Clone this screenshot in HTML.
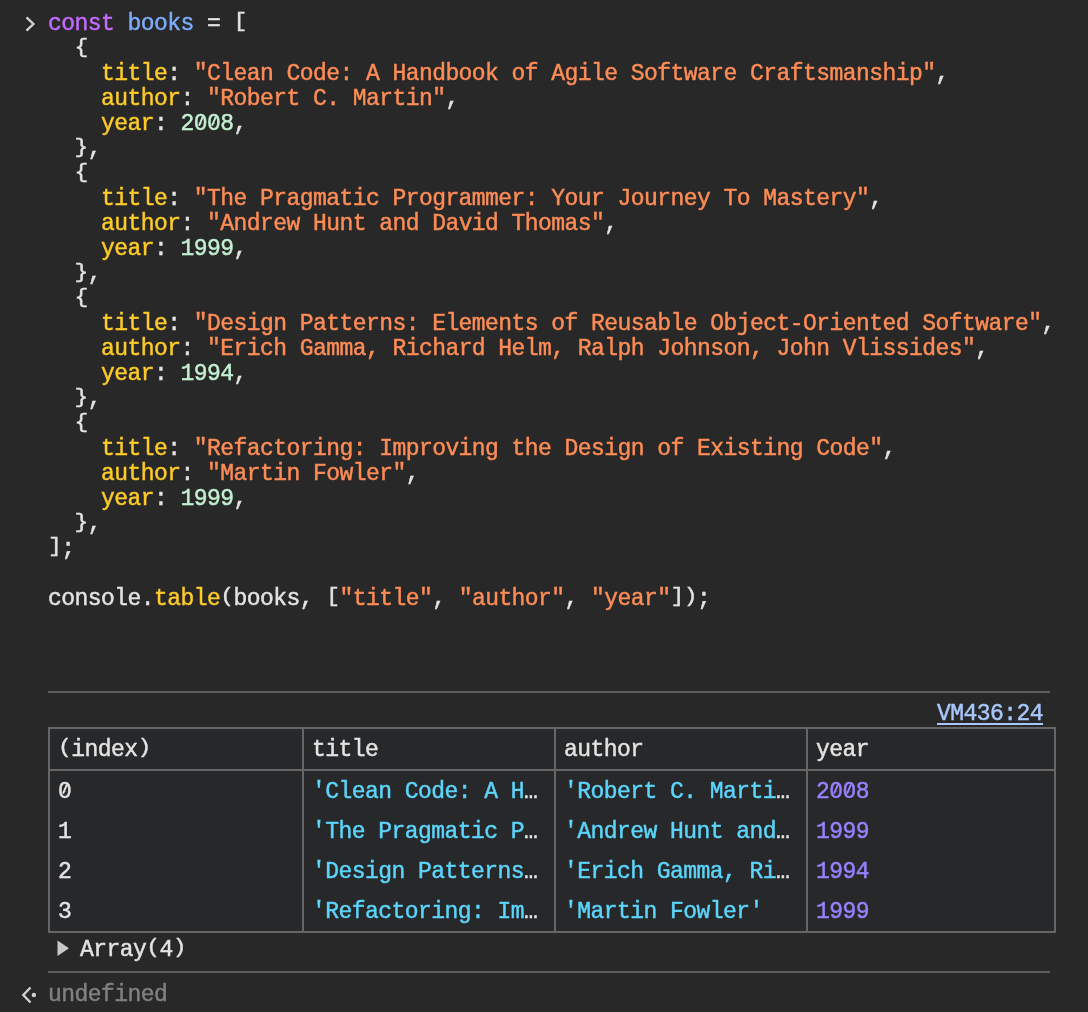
<!DOCTYPE html>
<html><head><meta charset="utf-8">
<style>
html,body{margin:0;padding:0;}
body{-webkit-text-stroke-width:0.45px;width:1088px;height:1012px;overflow:hidden;background:#282828;position:relative;font-family:"Liberation Mono",monospace;font-size:23px;color:#e3e3e3;letter-spacing:-0.557px;}
.abs{position:absolute;}
pre{margin:0;font:inherit;white-space:pre;}
#code{position:absolute;left:48px;top:12px;line-height:25px;}
.k{color:#c46bff}
.v{color:#7cacf8}
.p{color:#fdcb2a}
.s{color:#fd8c56}
.n{color:#c2f0d0}
.f{color:#fdcb2a}
.sep{position:absolute;left:48px;width:1002px;height:2px;background:#5e5e5e;}
#tbl{position:absolute;left:48px;top:727px;width:1004px;height:202px;border:2px solid #666;background:#27282a;}
.vl{position:absolute;top:729px;width:2px;height:202px;background:#666;}
#hb{position:absolute;left:50px;top:769px;width:1004px;height:2px;background:#666;}
.row{position:absolute;left:0;height:25px;line-height:25px;white-space:pre;}
.cell{position:absolute;top:0;white-space:pre;}
.e{color:#e3e3e3}
.z{display:inline-block;position:relative;}
.z::before{content:"";position:absolute;left:4.8px;top:7.3px;width:4.2px;height:4.2px;background:var(--bg,#282828);}
.z::after{content:"";position:absolute;left:5.8px;top:4.15px;width:2.2px;height:10px;background:currentColor;transform:rotate(23.4deg);}
.row{--bg:#27282a;}

.bc{display:inline-block;transform-origin:50% 11.5px;transform:translateY(-1.7px) scaleY(0.91)}
.bk{display:inline-block;transform-origin:50% 11.55px;transform:translateY(-1.55px) scaleY(0.852)}
.c{color:#5cd5fb}
.num{color:#9980ff}
#link{position:absolute;left:937px;top:702px;color:#a8c7fa;text-decoration:underline;text-decoration-thickness:2px;text-underline-offset:3px;letter-spacing:-0.557px;line-height:25px;}
#arr{position:absolute;left:80px;top:938px;line-height:25px;}
#undef{position:absolute;left:48px;top:983px;color:#808080;line-height:25px;}
</style></head>
<body>
<div id="wrap" style="position:absolute;left:0;top:0;width:1088px;height:1012px;will-change:transform">
<svg class="abs" style="left:20px;top:10px" width="20" height="28" viewBox="0 0 20 28"><path d="M6.5 7.3 L13.4 14 L6.5 20.7" fill="none" stroke="#d0d0d0" stroke-width="2.4"/></svg>
<pre id="code"><span class="k">const</span> <span class="v">books</span> = <span class="bk">[</span>
  <span class="bc">{</span>
    <span class="p">title</span>: <span class="s">"Clean Code: A Handbook of Agile Software Craftsmanship"</span>,
    <span class="p">author</span>: <span class="s">"Robert C. Martin"</span>,
    <span class="p">year</span>: <span class="n">2<span class="z">0</span><span class="z">0</span>8</span>,
  <span class="bc">}</span>,
  <span class="bc">{</span>
    <span class="p">title</span>: <span class="s">"The Pragmatic Programmer: Your Journey To Mastery"</span>,
    <span class="p">author</span>: <span class="s">"Andrew Hunt and David Thomas"</span>,
    <span class="p">year</span>: <span class="n">1999</span>,
  <span class="bc">}</span>,
  <span class="bc">{</span>
    <span class="p">title</span>: <span class="s">"Design Patterns: Elements of Reusable Object-Oriented Software"</span>,
    <span class="p">author</span>: <span class="s">"Erich Gamma, Richard Helm, Ralph Johnson, John Vlissides"</span>,
    <span class="p">year</span>: <span class="n">1994</span>,
  <span class="bc">}</span>,
  <span class="bc">{</span>
    <span class="p">title</span>: <span class="s">"Refactoring: Improving the Design of Existing Code"</span>,
    <span class="p">author</span>: <span class="s">"Martin Fowler"</span>,
    <span class="p">year</span>: <span class="n">1999</span>,
  <span class="bc">}</span>,
<span class="bk">]</span>;

console.<span class="f">table</span><span class="bk">(</span>books, <span class="bk">[</span><span class="s">"title"</span>, <span class="s">"author"</span>, <span class="s">"year"</span><span class="bk">]</span><span class="bk">)</span>;</pre>
<div class="sep" style="top:691px"></div>
<div id="link">VM436:24</div>
<div id="tbl"></div>
<div class="vl" style="left:302px"></div><div class="vl" style="left:554px"></div><div class="vl" style="left:806px"></div>
<div id="hb"></div>
<div class="row" style="top:738px"><span class="cell" style="left:58px"><span class="bk">(</span>index<span class="bk">)</span></span><span class="cell" style="left:312px">title</span><span class="cell" style="left:564px">author</span><span class="cell" style="left:816px">year</span></div>
<div class="row" style="top:780px"><span class="cell" style="left:58px"><span class="z">0</span></span><span class="cell c" style="left:312px">'Clean Code: A H<span class="e">…</span></span><span class="cell c" style="left:564px">'Robert C. Marti<span class="e">…</span></span><span class="cell num" style="left:816px">2<span class="z">0</span><span class="z">0</span>8</span></div>
<div class="row" style="top:820px"><span class="cell" style="left:58px">1</span><span class="cell c" style="left:312px">'The Pragmatic P<span class="e">…</span></span><span class="cell c" style="left:564px">'Andrew Hunt and<span class="e">…</span></span><span class="cell num" style="left:816px">1999</span></div>
<div class="row" style="top:860px"><span class="cell" style="left:58px">2</span><span class="cell c" style="left:312px">'Design Patterns<span class="e">…</span></span><span class="cell c" style="left:564px">'Erich Gamma, Ri<span class="e">…</span></span><span class="cell num" style="left:816px">1994</span></div>
<div class="row" style="top:900px"><span class="cell" style="left:58px">3</span><span class="cell c" style="left:312px">'Refactoring: Im<span class="e">…</span></span><span class="cell c" style="left:564px">'Martin Fowler'</span><span class="cell num" style="left:816px">1999</span></div>
<svg class="abs" style="left:54px;top:938px" width="20" height="20" viewBox="0 0 20 20"><path d="M3.5 2.5 L15 10.3 L3.5 18 Z" fill="#c8c8c8"/></svg>
<div id="arr">Array<span class="bk">(</span>4<span class="bk">)</span></div>
<div class="sep" style="top:971px"></div>
<svg class="abs" style="left:18px;top:982px" width="24" height="24" viewBox="0 0 24 24"><path d="M12.5 5.5 L5.3 13 L12.5 20.5" fill="none" stroke="#d0d0d0" stroke-width="2.4"/><circle cx="15.9" cy="13" r="2.2" fill="#d0d0d0"/></svg>
<div id="undef">undefined</div>
</div>
</body></html>
